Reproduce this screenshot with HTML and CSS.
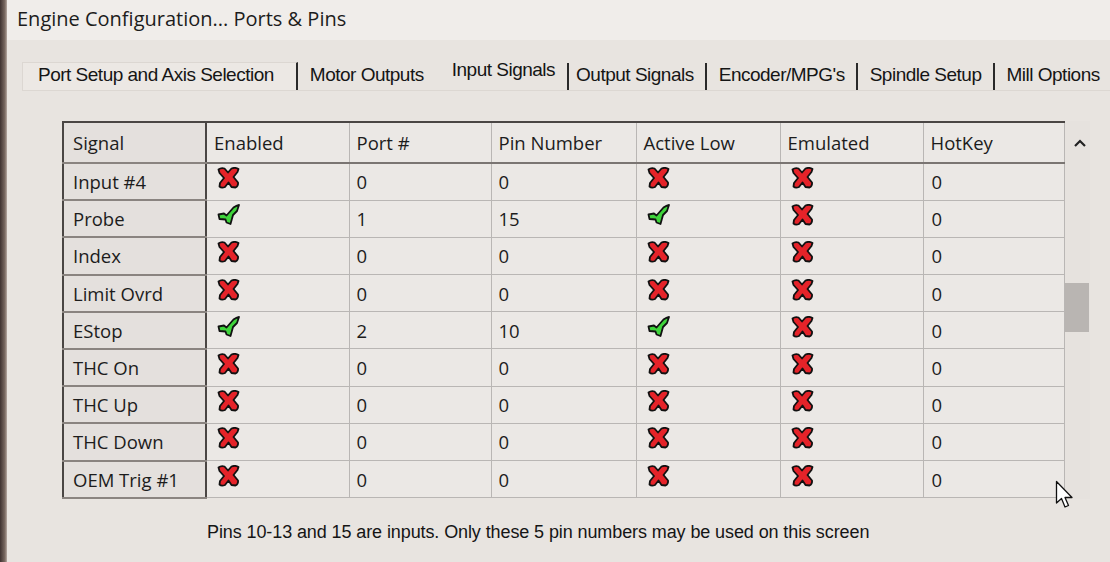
FILE: index.html
```html
<!DOCTYPE html>
<html lang="en">
<head>
  <meta charset="UTF-8">
  <title>Engine Configuration... Ports &amp; Pins</title>
  <link rel="stylesheet" href="styles.css">
</head>
<body>
  <div class="bezel"></div>
  <div class="window">
    <div class="titlebar">Engine Configuration... Ports &amp; Pins</div>

    <div class="tabs">
      <span class="tab">Port Setup and Axis Selection</span>
      <span class="tab">Motor Outputs</span>
      <span class="tab active">Input Signals</span>
      <span class="tab">Output Signals</span>
      <span class="tab">Encoder/MPG's</span>
      <span class="tab">Spindle Setup</span>
      <span class="tab">Mill Options</span>
    </div>

    <div class="panel">
      <div class="grid-wrap">
        <table class="grid">
          <colgroup>
            <col style="width:143px">
            <col style="width:143px">
            <col style="width:142px">
            <col style="width:145px">
            <col style="width:144px">
            <col style="width:143px">
            <col style="width:141px">
          </colgroup>
          <thead>
            <tr>
              <th class="rowhead">Signal</th>
              <th>Enabled</th>
              <th>Port #</th>
              <th>Pin Number</th>
              <th>Active Low</th>
              <th>Emulated</th>
              <th>HotKey</th>
            </tr>
          </thead>
          <tbody id="rows"></tbody>
        </table>
        <div class="scrollbar">
          <svg class="arrow" width="12" height="8" viewBox="0 0 12 8"><path d="M1 7 L6 2 L11 7" fill="none" stroke="#222" stroke-width="2.2"/></svg>
          <div class="thumb"></div>
        </div>
      </div>

      <p class="note">Pins 10-13 and 15 are inputs. Only these 5 pin numbers may be used on this screen</p>
    </div>
  </div>

  <svg class="cursor" width="22" height="30" viewBox="0 0 22 30">
    <path d="M1.5 1.5 L1.5 23 L6.5 18.5 L10 27 L13.5 25.5 L10 17.5 L17 17.5 Z" fill="#fff" stroke="#111" stroke-width="1.3" stroke-linejoin="round"/>
  </svg>

  <script>
    var data = [
      ['Input #4', 0, 0, 0, 0, 0, 0],
      ['Probe', 1, 1, 15, 1, 0, 0],
      ['Index', 0, 0, 0, 0, 0, 0],
      ['Limit Ovrd', 0, 0, 0, 0, 0, 0],
      ['EStop', 1, 2, 10, 1, 0, 0],
      ['THC On', 0, 0, 0, 0, 0, 0],
      ['THC Up', 0, 0, 0, 0, 0, 0],
      ['THC Down', 0, 0, 0, 0, 0, 0],
      ['OEM Trig #1', 0, 0, 0, 0, 0, 0]
    ];

    // red cross and green tick, drawn like the old bitmap icons
    var cross = '<svg class="ico" width="24" height="22" viewBox="0 0 24 22"><path d="M1.5 2.5 Q4 0.5 7.5 1.5 L11 5.5 L14.5 1.5 Q18.5 0 21.5 2 L20.5 5 L16.5 10 L21 15.5 Q21.5 19 18.5 20.5 L14.5 20 L11.5 15.5 L8 20 Q4.5 21.5 2.5 19.5 L3 16 L7 11 L2.5 6 Z" fill="#e52329" stroke="#111" stroke-width="1.8" stroke-linejoin="round"/></svg>';
    var tick = '<svg class="ico" width="24" height="22" viewBox="0 0 24 22"><path d="M1.5 10.5 L7 9.5 L9.5 11.5 L16.5 3.5 Q19.5 1.5 22 1 L20 7 L16 11 L13.5 20 L9.5 18.5 L8.5 15.5 L2.5 15 Z" fill="#3fd43b" stroke="#111" stroke-width="1.8" stroke-linejoin="round"/></svg>';

    var html = '';
    data.forEach(function (r) {
      html += '<tr>' +
        '<td class="rowhead">' + r[0] + '</td>' +
        '<td>' + (r[1] ? tick : cross) + '</td>' +
        '<td>' + r[2] + '</td>' +
        '<td>' + r[3] + '</td>' +
        '<td>' + (r[4] ? tick : cross) + '</td>' +
        '<td>' + (r[5] ? tick : cross) + '</td>' +
        '<td>' + r[6] + '</td>' +
        '</tr>';
    });
    document.getElementById('rows').innerHTML = html;
  </script>
</body>
</html>
```

FILE: styles.css
```css
body { margin: 0; display: flex; height: 562px; overflow: hidden; background: #e8e4e0; font-family: "Open Sans", "Noto Sans", sans-serif; color: #1c1c1c; }
.bezel { width: 7px; flex: none; background: linear-gradient(to right, #3e3230, #7a6a62 70%, #b7aaa3); }
.window { flex: 1; display: flex; flex-direction: column; min-width: 0; }

.titlebar { height: 40px; padding-left: 10px; background: #f0edea; font-size: 20px; line-height: 38px; }

.tabs { display: flex; align-items: flex-end; margin: 20px 0 0 15px; height: 30px; border-bottom: 1px solid #dcd7d2; font-family: "Liberation Sans", Arial, sans-serif; font-size: 19px; letter-spacing: -0.5px; color: #151515; white-space: nowrap; }
.tab { flex: none; padding: 0 11px 3px 12px; border-right: 2px solid #2a2a2a; line-height: 24px; }
.tab:first-child { padding-left: 15px; padding-right: 22px; background: #ece8e4; border-top: 1px solid #dcd7d2; border-left: 1px solid #dcd7d2; }
.tab:nth-child(2) { border-right: none; padding-right: 20px; }
.tab.active { border-right: none; padding: 0 12px 8px 8px; }
.tab.active + .tab { border-left: 2px solid #2a2a2a; padding-left: 7px; }

.panel { flex: 1; padding: 30px 0 0 55px; }
.grid-wrap { display: flex; width: 1028px; }

.grid { border-collapse: collapse; width: 1001px; table-layout: fixed; border-top: 2px solid #4a4644; border-left: 2px solid #4a4644; font-size: 18.5px; }
.grid th, .grid td { border: 1px solid #b9b6b4; padding: 0 0 0 7px; text-align: left; font-weight: normal; background: #ebe8e5; white-space: nowrap; overflow: hidden; }
.grid th { height: 39px; border-bottom: 2px solid #7a7572; }
.grid td { height: 35.2px; }
.grid .rowhead { background: #e4e0dd; border-right: 2px solid #4a4644; border-bottom: 2px solid #8a8480; padding-left: 9px; }
.grid td:last-child { padding-left: 8px; }
.ico { display: block; margin: -7px 0 0 3px; }

.scrollbar { width: 27px; position: relative; background: #e6e2de; }
.arrow { position: absolute; left: 9px; top: 18px; }
.thumb { position: absolute; left: 0; top: 162px; width: 24px; height: 49px; background: #b9b5b2; }

.note { margin: 23px 0 0 145px; font-family: "Liberation Sans", Arial, sans-serif; font-size: 18px; letter-spacing: -0.1px; color: #151515; }

.cursor { position: absolute; left: 1055px; top: 480px; }
```
